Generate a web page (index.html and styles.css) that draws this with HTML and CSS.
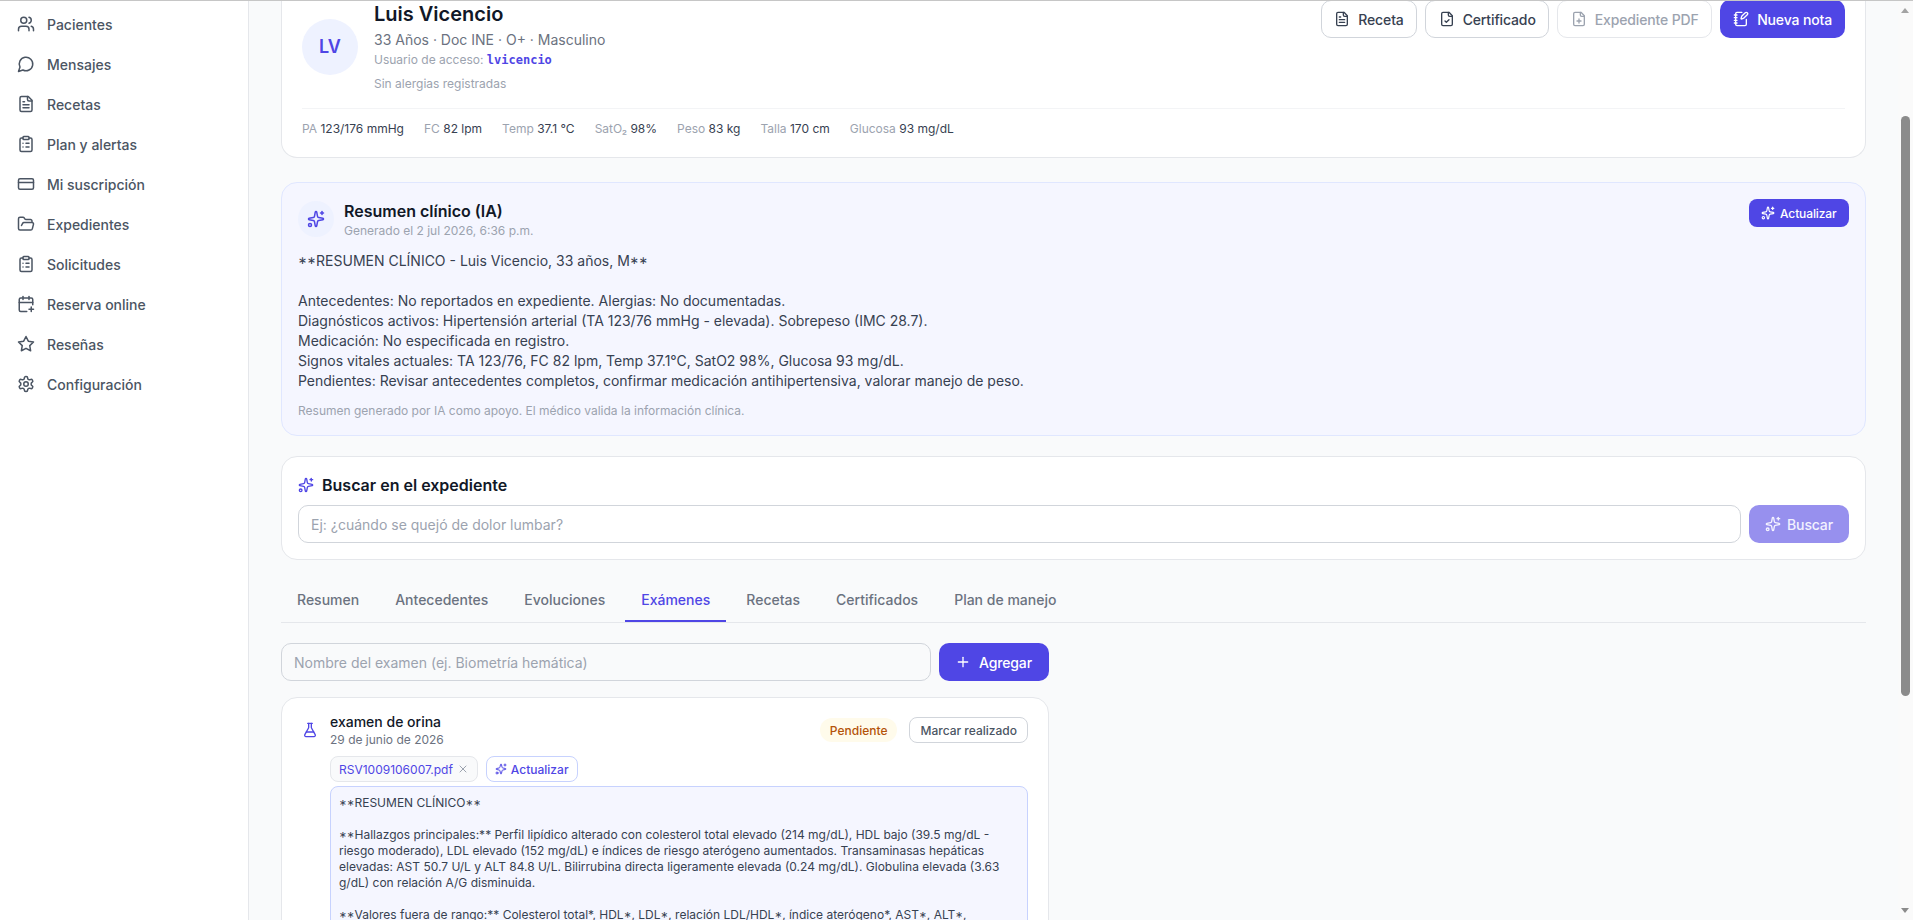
FILE: index.html
```html
<!DOCTYPE html>
<html lang="es">
<head>
    <meta charset="UTF-8">
    <meta name="viewport" content="width=device-width, initial-scale=1.0">
    <title>Expediente - Luis Vicencio</title>
    <link rel="stylesheet" href="styles.css">
</head>
<body>
    <!-- Icon sprite -->
    <svg class="sprite" xmlns="http://www.w3.org/2000/svg">
        <symbol id="i-users" viewBox="0 0 24 24"><path d="M16 21v-2a4 4 0 0 0-4-4H6a4 4 0 0 0-4 4v2"/><circle cx="9" cy="7" r="4"/><path d="M22 21v-2a4 4 0 0 0-3-3.87"/><path d="M16 3.13a4 4 0 0 1 0 7.75"/></symbol>
        <symbol id="i-message" viewBox="0 0 24 24"><path d="M7.9 20A9 9 0 1 0 4 16.1L2 22Z"/></symbol>
        <symbol id="i-file-text" viewBox="0 0 24 24"><path d="M15 2H6a2 2 0 0 0-2 2v16a2 2 0 0 0 2 2h12a2 2 0 0 0 2-2V7Z"/><path d="M14 2v4a2 2 0 0 0 2 2h4"/><path d="M10 9H8"/><path d="M16 13H8"/><path d="M16 17H8"/></symbol>
        <symbol id="i-clipboard" viewBox="0 0 24 24"><rect width="8" height="4" x="8" y="2" rx="1" ry="1"/><path d="M16 4h2a2 2 0 0 1 2 2v14a2 2 0 0 1-2 2H6a2 2 0 0 1-2-2V6a2 2 0 0 1 2-2h2"/><path d="M12 11h4"/><path d="M12 16h4"/><path d="M8 11h.01"/><path d="M8 16h.01"/></symbol>
        <symbol id="i-card" viewBox="0 0 24 24"><rect width="20" height="14" x="2" y="5" rx="2"/><line x1="2" x2="22" y1="10" y2="10"/></symbol>
        <symbol id="i-folder" viewBox="0 0 24 24"><path d="m6 14 1.5-2.9A2 2 0 0 1 9.24 10H20a2 2 0 0 1 1.94 2.5l-1.54 6a2 2 0 0 1-1.95 1.5H4a2 2 0 0 1-2-2V5a2 2 0 0 1 2-2h3.9a2 2 0 0 1 1.69.9l.81 1.2a2 2 0 0 0 1.67.9H18a2 2 0 0 1 2 2v2"/></symbol>
        <symbol id="i-calendar" viewBox="0 0 24 24"><path d="M8 2v4"/><path d="M16 2v4"/><path d="M21 13V6a2 2 0 0 0-2-2H5a2 2 0 0 0-2 2v14a2 2 0 0 0 2 2h8"/><path d="M3 10h18"/><path d="M16 19h6"/><path d="M19 16v6"/></symbol>
        <symbol id="i-star" viewBox="0 0 24 24"><polygon points="12 2 15.09 8.26 22 9.27 17 14.14 18.18 21.02 12 17.77 5.82 21.02 7 14.14 2 9.27 8.91 8.26 12 2"/></symbol>
        <symbol id="i-settings" viewBox="0 0 24 24"><path d="M12.22 2h-.44a2 2 0 0 0-2 2v.18a2 2 0 0 1-1 1.73l-.43.25a2 2 0 0 1-2 0l-.15-.08a2 2 0 0 0-2.73.73l-.22.38a2 2 0 0 0 .73 2.73l.15.1a2 2 0 0 1 1 1.72v.51a2 2 0 0 1-1 1.74l-.15.09a2 2 0 0 0-.73 2.73l.22.38a2 2 0 0 0 2.73.73l.15-.08a2 2 0 0 1 2 0l.43.25a2 2 0 0 1 1 1.73V20a2 2 0 0 0 2 2h.44a2 2 0 0 0 2-2v-.18a2 2 0 0 1 1-1.73l.43-.25a2 2 0 0 1 2 0l.15.08a2 2 0 0 0 2.73-.73l.22-.39a2 2 0 0 0-.73-2.73l-.15-.08a2 2 0 0 1-1-1.74v-.5a2 2 0 0 1 1-1.74l.15-.09a2 2 0 0 0 .73-2.73l-.22-.38a2 2 0 0 0-2.73-.73l-.15.08a2 2 0 0 1-2 0l-.43-.25a2 2 0 0 1-1-1.73V4a2 2 0 0 0-2-2z"/><circle cx="12" cy="12" r="3"/></symbol>
        <symbol id="i-sparkles" viewBox="0 0 24 24"><path d="M11.017 2.814a1 1 0 0 1 1.966 0l1.051 5.558a2 2 0 0 0 1.594 1.594l5.558 1.051a1 1 0 0 1 0 1.966l-5.558 1.051a2 2 0 0 0-1.594 1.594l-1.051 5.558a1 1 0 0 1-1.966 0l-1.051-5.558a2 2 0 0 0-1.594-1.594l-5.558-1.051a1 1 0 0 1 0-1.966l5.558-1.051a2 2 0 0 0 1.594-1.594z"/><path d="M20 2v4"/><path d="M22 4h-4"/><circle cx="4" cy="20" r="2"/></symbol>
        <symbol id="i-file-check" viewBox="0 0 24 24"><path d="M15 2H6a2 2 0 0 0-2 2v16a2 2 0 0 0 2 2h12a2 2 0 0 0 2-2V7Z"/><path d="M14 2v4a2 2 0 0 0 2 2h4"/><path d="m9 15 2 2 4-4"/></symbol>
        <symbol id="i-file-plus" viewBox="0 0 24 24"><path d="M15 2H6a2 2 0 0 0-2 2v16a2 2 0 0 0 2 2h12a2 2 0 0 0 2-2V7Z"/><path d="M14 2v4a2 2 0 0 0 2 2h4"/><path d="M9 15h6"/><path d="M12 18v-6"/></symbol>
        <symbol id="i-notebook" viewBox="0 0 24 24"><path d="M13.4 2H6a2 2 0 0 0-2 2v16a2 2 0 0 0 2 2h12a2 2 0 0 0 2-2v-7.4"/><path d="M2 6h4"/><path d="M2 10h4"/><path d="M2 14h4"/><path d="M2 18h4"/><path d="M21.378 5.626a1 1 0 1 0-3.004-3.004l-5.01 5.012a2 2 0 0 0-.506.854l-.837 2.87a.5.5 0 0 0 .62.62l2.87-.837a2 2 0 0 0 .854-.506z"/></symbol>
        <symbol id="i-flask" viewBox="0 0 24 24"><path d="M14 2v6a2 2 0 0 0 .245.96l5.51 10.08A2 2 0 0 1 18 22H6a2 2 0 0 1-1.755-2.96l5.51-10.08A2 2 0 0 0 10 8V2"/><path d="M6.453 15h11.094"/><path d="M8.5 2h7"/></symbol>
        <symbol id="i-plus" viewBox="0 0 24 24"><path d="M5 12h14"/><path d="M12 5v14"/></symbol>
        <symbol id="i-x" viewBox="0 0 24 24"><path d="M18 6 6 18"/><path d="m6 6 12 12"/></symbol>
    </svg>

    <div class="app">
        <!-- Sidebar navigation -->
        <aside class="sidebar">
            <a class="nav-item"><svg class="icon"><use href="#i-users"/></svg>Pacientes</a>
            <a class="nav-item"><svg class="icon"><use href="#i-message"/></svg>Mensajes</a>
            <a class="nav-item"><svg class="icon"><use href="#i-file-text"/></svg>Recetas</a>
            <a class="nav-item"><svg class="icon"><use href="#i-clipboard"/></svg>Plan y alertas</a>
            <a class="nav-item"><svg class="icon"><use href="#i-card"/></svg>Mi suscripción</a>
            <a class="nav-item"><svg class="icon"><use href="#i-folder"/></svg>Expedientes</a>
            <a class="nav-item"><svg class="icon"><use href="#i-clipboard"/></svg>Solicitudes</a>
            <a class="nav-item"><svg class="icon"><use href="#i-calendar"/></svg>Reserva online</a>
            <a class="nav-item"><svg class="icon"><use href="#i-star"/></svg>Reseñas</a>
            <a class="nav-item"><svg class="icon"><use href="#i-settings"/></svg>Configuración</a>
        </aside>

        <main class="content">
            <!-- Patient header -->
            <section class="card patient-card">
                <div class="patient-top">
                    <div class="patient-id">
                        <div class="avatar">LV</div>
                        <div class="patient-info">
                            <h1 class="patient-name">Luis Vicencio</h1>
                            <p class="patient-meta">33 Años · Doc INE · O+ · Masculino</p>
                            <p class="patient-user">Usuario de acceso: <span class="mono">lvicencio</span></p>
                            <p class="patient-allergy">Sin alergias registradas</p>
                        </div>
                    </div>
                    <div class="patient-actions">
                        <button class="btn btn-outline"><svg class="icon icon-16"><use href="#i-file-text"/></svg>Receta</button>
                        <button class="btn btn-outline"><svg class="icon icon-16"><use href="#i-file-check"/></svg>Certificado</button>
                        <button class="btn btn-outline btn-disabled"><svg class="icon icon-16"><use href="#i-file-plus"/></svg>Expediente PDF</button>
                        <button class="btn btn-primary"><svg class="icon icon-16"><use href="#i-notebook"/></svg>Nueva nota</button>
                    </div>
                </div>
                <div class="vitals">
                    <span><em>PA</em> 123/176 mmHg</span>
                    <span><em>FC</em> 82 lpm</span>
                    <span><em>Temp</em> 37.1 °C</span>
                    <span><em>SatO₂</em> 98%</span>
                    <span><em>Peso</em> 83 kg</span>
                    <span><em>Talla</em> 170 cm</span>
                    <span><em>Glucosa</em> 93 mg/dL</span>
                </div>
            </section>

            <!-- AI summary -->
            <section class="card summary-card">
                <div class="summary-head">
                    <div class="summary-title">
                        <div class="summary-badge"><svg class="icon"><use href="#i-sparkles"/></svg></div>
                        <div>
                            <h2 class="card-title">Resumen clínico (IA)</h2>
                            <p class="summary-date">Generado el 2 jul 2026, 6:36 p.m.</p>
                        </div>
                    </div>
                    <button class="btn btn-primary btn-sm"><svg class="icon icon-14"><use href="#i-sparkles"/></svg>Actualizar</button>
                </div>
                <p class="summary-text"><span class="ast">**</span>RESUMEN CLÍNICO - Luis Vicencio, 33 años, M<span class="ast">**</span>

Antecedentes: No reportados en expediente. Alergias: No documentadas.
Diagnósticos activos: Hipertensión arterial (TA 123/76 mmHg - elevada). Sobrepeso (IMC 28.7).
Medicación: No especificada en registro.
Signos vitales actuales: TA 123/76, FC 82 lpm, Temp 37.1°C, SatO2 98%, Glucosa 93 mg/dL.
Pendientes: Revisar antecedentes completos, confirmar medicación antihipertensiva, valorar manejo de peso.</p>
                <p class="summary-note">Resumen generado por IA como apoyo. El médico valida la información clínica.</p>
            </section>

            <!-- Record search -->
            <section class="card search-card">
                <div class="search-title">
                    <svg class="icon icon-16 icon-indigo"><use href="#i-sparkles"/></svg>
                    <h2 class="card-title">Buscar en el expediente</h2>
                </div>
                <div class="field-row">
                    <div class="field field-grow">Ej: ¿cuándo se quejó de dolor lumbar?</div>
                    <button class="btn btn-primary btn-faded"><svg class="icon icon-16"><use href="#i-sparkles"/></svg>Buscar</button>
                </div>
            </section>

            <!-- Tabs -->
            <nav class="tabs">
                <a class="tab">Resumen</a>
                <a class="tab">Antecedentes</a>
                <a class="tab">Evoluciones</a>
                <a class="tab tab-active">Exámenes</a>
                <a class="tab">Recetas</a>
                <a class="tab">Certificados</a>
                <a class="tab">Plan de manejo</a>
            </nav>

            <!-- Exams panel -->
            <div class="exams">
                <div class="field-row">
                    <div class="field field-grow">Nombre del examen (ej. Biometría hemática)</div>
                    <button class="btn btn-primary btn-add"><svg class="icon icon-16"><use href="#i-plus"/></svg>Agregar</button>
                </div>

                <article class="card exam-card">
                    <div class="exam-head">
                        <svg class="icon icon-16 icon-indigo"><use href="#i-flask"/></svg>
                        <div class="exam-name">
                            <h3>examen de orina</h3>
                            <p>29 de junio de 2026</p>
                        </div>
                        <span class="pill-pending">Pendiente</span>
                        <button class="btn-mark">Marcar realizado</button>
                    </div>
                    <div class="exam-body">
                        <div class="exam-files">
                            <span class="chip-file">RSV1009106007.pdf <svg class="icon icon-12"><use href="#i-x"/></svg></span>
                            <button class="chip-update"><svg class="icon icon-12"><use href="#i-sparkles"/></svg>Actualizar</button>
                        </div>
                        <div class="exam-result"><span class="ast">**</span>RESUMEN CLÍNICO<span class="ast">**</span>

<span class="ast">**</span>Hallazgos principales:** Perfil lipídico alterado con colesterol total elevado (214 mg/dL), HDL bajo (39.5 mg/dL - riesgo moderado), LDL elevado (152 mg/dL) e índices de riesgo aterógeno aumentados. Transaminasas hepáticas elevadas: AST 50.7 U/L y ALT 84.8 U/L. Bilirrubina directa ligeramente elevada (0.24 mg/dL). Globulina elevada (3.63 g/dL) con relación A/G disminuida.

<span class="ast">**</span>Valores fuera de rango:** Colesterol total*, HDL<span class="ast">*</span>, LDL<span class="ast">*</span>, relación LDL/HDL<span class="ast">*</span>, índice aterógeno*, AST<span class="ast">*</span>, ALT<span class="ast">*</span>,</div>
                    </div>
                </article>
            </div>
        </main>

        <!-- Window scrollbar -->
        <div class="scrollbar">
            <span class="arrow-up"></span>
            <span class="thumb"></span>
            <span class="arrow-down"></span>
        </div>
    </div>
</body>
</html>
```

FILE: styles.css
```css
/* Reset */
* {
    margin: 0;
    padding: 0;
    box-sizing: border-box;
}

html, body {
    height: 100%;
    overflow: hidden;
}

body {
    font-family: 'Inter', 'Noto Sans', sans-serif;
    font-size: 14px;
    color: #111827;
    background: #f9fafb;
}

.sprite {
    display: none;
}

/* Base icon */
.icon {
    width: 18px;
    height: 18px;
    flex-shrink: 0;
    fill: none;
    stroke: currentColor;
    stroke-width: 2;
    stroke-linecap: round;
    stroke-linejoin: round;
}

.icon-16 { width: 16px; height: 16px; }
.icon-14 { width: 14px; height: 14px; }
.icon-12 { width: 12px; height: 12px; }
.icon-indigo { color: #4f46e5; }

/* App frame */
.app {
    display: flex;
    height: 920px;
    overflow: hidden;
    border-top: 1px solid #c6c6c6;
}

/* Sidebar */
.sidebar {
    width: 249px;
    flex-shrink: 0;
    padding-top: 3px;
    background: #fff;
    border-right: 1px solid #e5e7eb;
}

.nav-item {
    display: flex;
    align-items: center;
    gap: 12px;
    height: 40px;
    padding-left: 17px;
    font-weight: 500;
    color: #4b5563;
}

/* Main column */
.content {
    flex: 1;
    min-width: 0;
    padding: 0 32px;
    overflow: hidden;
}

.card {
    background: #fff;
    border: 1px solid #e5e7eb;
    border-radius: 16px;
}

.card-title {
    font-size: 16px;
    line-height: 24px;
    font-weight: 600;
    color: #111827;
}

/* Asterisks next to capitals use the wider, centred form */
.ast {
    font-feature-settings: "case";
}

/* Patient card */
.patient-card {
    padding: 0 20px 20px;
    border-top: none;
    border-top-left-radius: 0;
    border-top-right-radius: 0;
}

.patient-top {
    display: flex;
    justify-content: space-between;
    align-items: flex-start;
    padding-bottom: 16px;
    border-bottom: 1px solid #f3f4f6;
}

.patient-id {
    display: flex;
    align-items: center;
    gap: 16px;
}

.avatar {
    width: 56px;
    height: 56px;
    display: flex;
    align-items: center;
    justify-content: center;
    border-radius: 50%;
    background: #eef2ff;
    color: #4f46e5;
    font-size: 18px;
    font-weight: 600;
}

.patient-name {
    font-size: 20px;
    line-height: 28px;
    font-weight: 600;
    margin-top: -1px;
}

.patient-meta {
    font-size: 14px;
    line-height: 20px;
    color: #6b7280;
    margin-top: 2px;
}

.patient-user {
    height: 16px;
    font-size: 12px;
    line-height: 16px;
    color: #9ca3af;
    margin-top: 2px;
}

.mono {
    font-family: 'DejaVu Sans Mono', 'Liberation Mono', monospace;
    font-size: 12px;
    font-weight: 600;
    color: #4f46e5;
}

.patient-allergy {
    font-size: 12px;
    line-height: 16px;
    color: #9ca3af;
    margin-top: 8px;
}

.patient-actions {
    display: flex;
    gap: 8px;
    margin-top: -1px;
}

.btn {
    display: inline-flex;
    align-items: center;
    justify-content: center;
    gap: 8px;
    height: 38px;
    padding: 0 12px;
    border-radius: 10px;
    border: 1px solid transparent;
    font-family: inherit;
    font-size: 14px;
    font-weight: 500;
    letter-spacing: -0.01em;
    background: #fff;
}

.btn-outline {
    padding: 0 12.5px;
    border-color: #d1d5db;
    color: #374151;
}

.btn-disabled {
    border-color: #e5e7eb;
    color: #9ca3af;
}

.btn-primary {
    background: #4f46e5;
    color: #fff;
}

.btn-sm {
    height: 28px;
    padding: 0 11.5px;
    gap: 5px;
    border-radius: 8px;
    font-size: 12px;
}

.btn-faded {
    width: 100px;
    gap: 6px;
    background: #9790ee;
    color: #f3f2ff;
}

.btn-add {
    width: 110px;
    justify-content: flex-start;
    padding: 0 0 0 15px;
}

.vitals {
    display: flex;
    gap: 20px;
    padding-top: 12px;
    font-size: 12px;
    line-height: 16px;
    color: #374151;
}

.vitals em {
    font-style: normal;
    color: #9ca3af;
}

/* AI summary card */
.summary-card {
    margin-top: 24px;
    padding: 16px;
    background: #f5f6ff;
    border-color: #e0e7ff;
}

.summary-head {
    display: flex;
    justify-content: space-between;
    align-items: flex-start;
}

.summary-title {
    display: flex;
    align-items: center;
    gap: 10px;
}

.summary-badge {
    width: 36px;
    height: 36px;
    display: flex;
    align-items: center;
    justify-content: center;
    border-radius: 50%;
    background: #eef2ff;
    color: #4f46e5;
}

.summary-date {
    font-size: 12px;
    line-height: 16px;
    color: #9ca3af;
}

.summary-text {
    margin-top: 12px;
    font-size: 14px;
    line-height: 20px;
    color: #374151;
    white-space: pre-wrap;
}

.summary-note {
    margin-top: 12px;
    font-size: 12px;
    line-height: 16px;
    color: #9ca3af;
}

/* Search card */
.search-card {
    margin-top: 20px;
    padding: 16px;
}

.search-title {
    display: flex;
    align-items: center;
    gap: 8px;
    margin-bottom: 8px;
}

.field-row {
    display: flex;
    gap: 8px;
}

.field {
    height: 38px;
    display: flex;
    align-items: center;
    padding: 0 12px;
    background: #fff;
    border: 1px solid #d1d5db;
    border-radius: 10px;
    color: #9ca3af;
}

.field-grow {
    flex: 1;
}

/* Tabs */
.tabs {
    display: flex;
    gap: 4px;
    margin-top: 20px;
    border-bottom: 1px solid #e5e7eb;
}

.tab {
    padding: 10px 16px;
    line-height: 20px;
    font-weight: 500;
    color: #6b7280;
    border-bottom: 2px solid transparent;
}

.tab-active {
    color: #4f46e5;
    border-bottom-color: #4f46e5;
}

/* Exams */
.exams {
    width: 768px;
    margin-top: 20px;
}

.exams .field {
    background: #f9fafb;
}

.exam-card {
    margin-top: 16px;
    padding: 14px 20px 20px;
}

.exam-head {
    display: flex;
    align-items: center;
    gap: 12px;
}

.exam-name {
    flex: 1;
}

.exam-name h3 {
    font-size: 14px;
    line-height: 20px;
    font-weight: 500;
}

.exam-name p {
    font-size: 12px;
    line-height: 16px;
    color: #6b7280;
}

.pill-pending {
    height: 24px;
    display: flex;
    align-items: center;
    padding: 0 10px;
    border-radius: 12px;
    background: #fffbeb;
    color: #b45309;
    font-size: 12px;
    font-weight: 500;
}

.btn-mark {
    height: 26px;
    padding: 0 10px;
    background: #fff;
    border: 1px solid #d1d5db;
    border-radius: 8px;
    font-family: inherit;
    font-size: 12px;
    font-weight: 500;
    color: #4b5563;
}

.exam-body {
    margin-left: 28px;
}

.exam-files {
    display: flex;
    gap: 8px;
    margin-top: 8px;
}

.chip-file,
.chip-update {
    display: inline-flex;
    align-items: center;
    height: 26px;
    padding: 0 8px;
    border-radius: 8px;
    font-family: inherit;
    font-size: 12px;
}

.chip-file {
    gap: 4px;
    background: #f9fafb;
    border: 1px solid #e5e7eb;
    color: #4f46e5;
}

.chip-file .icon {
    color: #9ca3af;
}

.chip-update {
    gap: 4px;
    background: #fff;
    border: 1px solid #c7d2fe;
    color: #4f46e5;
    font-weight: 500;
}

.exam-result {
    margin-top: 4px;
    padding: 8px;
    background: #f5f6ff;
    border: 1px solid #c7d2fe;
    border-radius: 8px;
    font-size: 12px;
    line-height: 16px;
    color: #374151;
    white-space: pre-wrap;
}

/* Window scrollbar */
.scrollbar {
    width: 15px;
    flex-shrink: 0;
    height: 100%;
    position: relative;
    background: #fafafa;
}

.thumb {
    position: absolute;
    top: 115px;
    left: 3px;
    width: 9px;
    height: 580px;
    border-radius: 5px;
    background: #8b8b8b;
}

.arrow-up,
.arrow-down {
    position: absolute;
    left: 3px;
    border-left: 4.5px solid transparent;
    border-right: 4.5px solid transparent;
}

.arrow-up {
    top: 7px;
    border-bottom: 5px solid #a3a3a3;
}

.arrow-down {
    bottom: 7px;
    border-top: 5px solid #8b8b8b;
}
```
